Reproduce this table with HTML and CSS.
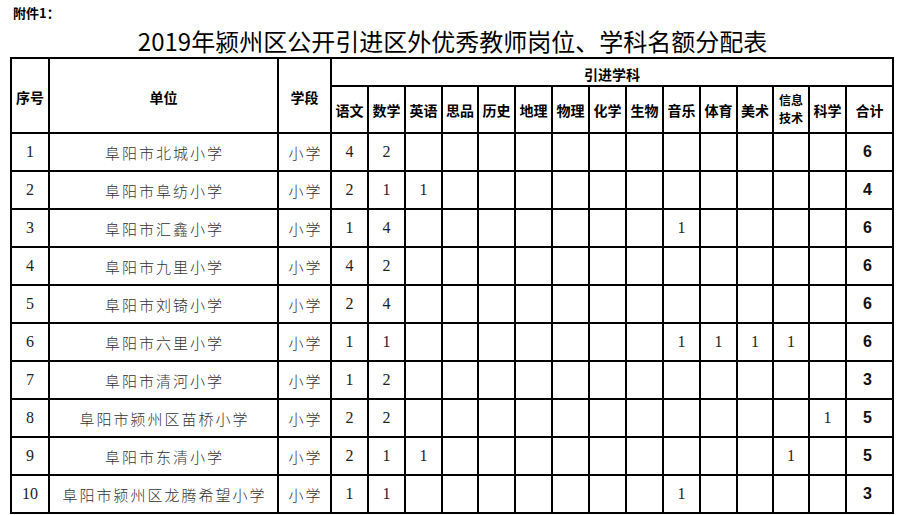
FILE: index.html
```html
<!DOCTYPE html>
<html lang="zh-CN">
<head>
<meta charset="utf-8">
<title>2019年颍州区公开引进区外优秀教师岗位、学科名额分配表</title>
<link rel="stylesheet" href="styles.css">
</head>
<body>
<div class="note">附件1：</div>
<h1 class="title">2019年颍州区公开引进区外优秀教师岗位、学科名额分配表</h1>
<div class="sheet">
  <div class="c hd tall">序号</div>
  <div class="c hd tall">单位</div>
  <div class="c hd tall">学段</div>
  <div class="c hd group">引进学科</div>
  <div class="c hd">语文</div>
  <div class="c hd">数学</div>
  <div class="c hd">英语</div>
  <div class="c hd">思品</div>
  <div class="c hd">历史</div>
  <div class="c hd">地理</div>
  <div class="c hd">物理</div>
  <div class="c hd">化学</div>
  <div class="c hd">生物</div>
  <div class="c hd">音乐</div>
  <div class="c hd">体育</div>
  <div class="c hd">美术</div>
  <div class="c hd two">信息<br>技术</div>
  <div class="c hd">科学</div>
  <div class="c hd">合计</div>

  <div class="c n">1</div><div class="c name">阜阳市北城小学</div><div class="c name">小学</div>
  <div class="c n">4</div><div class="c n">2</div><div class="c"></div><div class="c"></div><div class="c"></div><div class="c"></div><div class="c"></div><div class="c"></div><div class="c"></div><div class="c"></div><div class="c"></div><div class="c"></div><div class="c"></div><div class="c"></div><div class="c tot">6</div>

  <div class="c n">2</div><div class="c name">阜阳市阜纺小学</div><div class="c name">小学</div>
  <div class="c n">2</div><div class="c n">1</div><div class="c n">1</div><div class="c"></div><div class="c"></div><div class="c"></div><div class="c"></div><div class="c"></div><div class="c"></div><div class="c"></div><div class="c"></div><div class="c"></div><div class="c"></div><div class="c"></div><div class="c tot">4</div>

  <div class="c n">3</div><div class="c name">阜阳市汇鑫小学</div><div class="c name">小学</div>
  <div class="c n">1</div><div class="c n">4</div><div class="c"></div><div class="c"></div><div class="c"></div><div class="c"></div><div class="c"></div><div class="c"></div><div class="c"></div><div class="c n">1</div><div class="c"></div><div class="c"></div><div class="c"></div><div class="c"></div><div class="c tot">6</div>

  <div class="c n">4</div><div class="c name">阜阳市九里小学</div><div class="c name">小学</div>
  <div class="c n">4</div><div class="c n">2</div><div class="c"></div><div class="c"></div><div class="c"></div><div class="c"></div><div class="c"></div><div class="c"></div><div class="c"></div><div class="c"></div><div class="c"></div><div class="c"></div><div class="c"></div><div class="c"></div><div class="c tot">6</div>

  <div class="c n">5</div><div class="c name">阜阳市刘锜小学</div><div class="c name">小学</div>
  <div class="c n">2</div><div class="c n">4</div><div class="c"></div><div class="c"></div><div class="c"></div><div class="c"></div><div class="c"></div><div class="c"></div><div class="c"></div><div class="c"></div><div class="c"></div><div class="c"></div><div class="c"></div><div class="c"></div><div class="c tot">6</div>

  <div class="c n">6</div><div class="c name">阜阳市六里小学</div><div class="c name">小学</div>
  <div class="c n">1</div><div class="c n">1</div><div class="c"></div><div class="c"></div><div class="c"></div><div class="c"></div><div class="c"></div><div class="c"></div><div class="c"></div><div class="c n">1</div><div class="c n">1</div><div class="c n">1</div><div class="c n">1</div><div class="c"></div><div class="c tot">6</div>

  <div class="c n">7</div><div class="c name">阜阳市清河小学</div><div class="c name">小学</div>
  <div class="c n">1</div><div class="c n">2</div><div class="c"></div><div class="c"></div><div class="c"></div><div class="c"></div><div class="c"></div><div class="c"></div><div class="c"></div><div class="c"></div><div class="c"></div><div class="c"></div><div class="c"></div><div class="c"></div><div class="c tot">3</div>

  <div class="c n">8</div><div class="c name">阜阳市颍州区苗桥小学</div><div class="c name">小学</div>
  <div class="c n">2</div><div class="c n">2</div><div class="c"></div><div class="c"></div><div class="c"></div><div class="c"></div><div class="c"></div><div class="c"></div><div class="c"></div><div class="c"></div><div class="c"></div><div class="c"></div><div class="c"></div><div class="c n">1</div><div class="c tot">5</div>

  <div class="c n">9</div><div class="c name">阜阳市东清小学</div><div class="c name">小学</div>
  <div class="c n">2</div><div class="c n">1</div><div class="c n">1</div><div class="c"></div><div class="c"></div><div class="c"></div><div class="c"></div><div class="c"></div><div class="c"></div><div class="c"></div><div class="c"></div><div class="c"></div><div class="c n">1</div><div class="c"></div><div class="c tot">5</div>

  <div class="c n">10</div><div class="c name">阜阳市颍州区龙腾希望小学</div><div class="c name">小学</div>
  <div class="c n">1</div><div class="c n">1</div><div class="c"></div><div class="c"></div><div class="c"></div><div class="c"></div><div class="c"></div><div class="c"></div><div class="c"></div><div class="c n">1</div><div class="c"></div><div class="c"></div><div class="c"></div><div class="c"></div><div class="c tot">3</div>
</div>
</body>
</html>
```

FILE: styles.css
```css
html, body {
  margin: 0;
  padding: 0;
  background: #fff;
}

body {
  width: 905px;
  height: 515px;
  overflow: hidden;
  font-family: "Noto Sans CJK SC", "Noto Sans", sans-serif;
  color: #111;
}

.note {
  padding: 5px 0 0 13px;
  font-size: 13px;
  line-height: 15px;
  font-weight: bold;
  color: #000;
}

.title {
  margin: 7px 0 0 0;
  font-size: 24px;
  line-height: 28px;
  font-weight: normal;
  text-align: center;
  color: #000;
}

.sheet {
  display: grid;
  grid-template-columns: 36px 227px 51px 35px 35px 35px 34px 35px 35px 35px 35px 35px 35px 35px 34px 34px 35px 45px;
  grid-template-rows: 26px 45px repeat(10, 36px);
  gap: 2px;
  padding: 2px;
  background: #000;
  width: max-content;
  margin: 2px 0 0 10px;
}

.c {
  background: #fff;
  display: flex;
  align-items: center;
  justify-content: center;
  text-align: center;
}

.hd {
  font-size: 14px;
  font-weight: bold;
  color: #000;
  line-height: 16px;
  white-space: nowrap;
}

.tall {
  grid-row: span 2;
  padding-top: 3px;
}

.group {
  grid-column: span 15;
  padding-top: 4px;
}

.two {
  font-size: 12px;
  line-height: 17.5px;
  padding-bottom: 2px;
}

.n {
  font-family: "Liberation Serif", serif;
  font-size: 16px;
  color: #222;
}

.name {
  font-size: 15px;
  letter-spacing: 2px;
  padding-left: 2px;
  color: #333;
  font-weight: 300;
}

.tot {
  font-family: "Liberation Sans", Arial, sans-serif;
  font-size: 16px;
  font-weight: bold;
  color: #111;
  padding-right: 4px;
}
```
